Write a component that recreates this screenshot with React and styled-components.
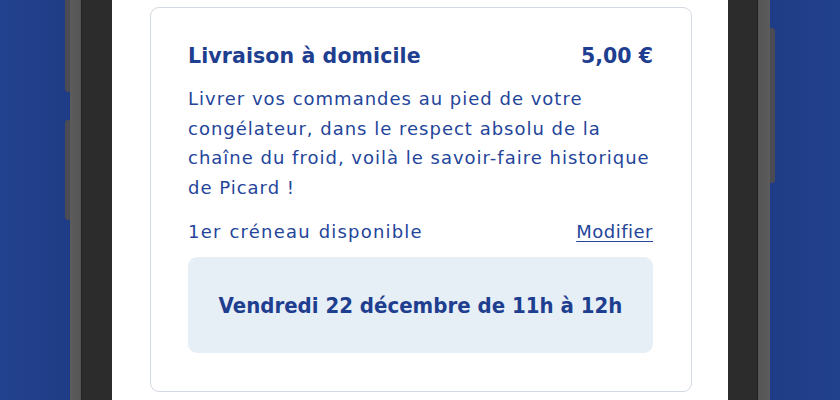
import styled, { createGlobalStyle } from "styled-components"

const GlobalStyle = createGlobalStyle`
    html, body {
        margin: 0;
        padding: 0;
        height: 400px;
        overflow: hidden;
    }
    body {
        background: linear-gradient(to right, #23428f 0%, #1f3c86 8%, #1f3c86 92%, #22418d 100%);
        font-family: "DejaVu Sans", "Noto Sans", sans-serif;
    }
`

const Page = styled.div`
    width: 840px;
    height: 400px;
    display: flex;
    justify-content: center;
`

const Phone = styled.div`
    position: relative;
    width: 700px;
    height: 400px;
    padding: 0 42px;
    box-sizing: border-box;
    background: linear-gradient(to right,
        #5c5c5c 0px, #555555 11px, #222222 11px, #222222 12px, #2c2c2c 12px,
        #2c2c2c 687px, #222222 687px, #222222 688px, #555555 688px, #5c5c5c 700px);
    display: flex;
`

const SideButton = styled.div`
    position: absolute;
    width: 5px;
    top: ${props => props.top}px;
    height: ${props => props.h}px;
    left: ${props => props.side === "left" && "-5px"};
    right: ${props => props.side === "right" && "-5px"};
    background: #4b4b55;
    border-radius: ${props => props.side === "left" ? "3px 0 0 3px" : "0 3px 3px 0"};
`

const Screen = styled.div`
    flex: 1;
    min-width: 0;
    background: #ffffff;
    padding: 7px 36px 0 38px;
    box-sizing: border-box;
`

const Card = styled.div`
    border: 1.5px solid #d3d9e2;
    border-radius: 9px;
    padding: 34px 38px 38px 37px;
    color: #1e3e90;
    overflow: hidden;
`

const Header = styled.div`
    display: flex;
    justify-content: space-between;
    align-items: baseline;
`

const Title = styled.h2`
    margin: 0;
    font-size: 20.5px;
    font-weight: 700;
    line-height: 28px;
    letter-spacing: 0.1px;
`

const Price = styled.span`
    font-size: 20.5px;
    font-weight: 700;
`

const Desc = styled.p`
    margin: 14px 0 0;
    font-size: 18px;
    line-height: 29.5px;
    font-weight: 400;
    letter-spacing: 1px;
    color: #24459a;
    white-space: nowrap;
`

const SlotRow = styled.div`
    display: flex;
    justify-content: space-between;
    align-items: baseline;
    margin-top: 17px;
    font-size: 18px;
    line-height: 26px;
    letter-spacing: 1.2px;
    word-spacing: 1px;
    color: #24459a;
`

const Link = styled.a`
    color: #24459a;
    letter-spacing: 0.5px;
    text-decoration: underline;
    text-underline-offset: 3px;
    text-decoration-thickness: 1px;
`

const SlotBox = styled.div`
    margin-top: 12px;
    height: 96px;
    border-radius: 9px;
    background: #e7eff6;
    display: flex;
    align-items: center;
    justify-content: center;
    font-family: "DejaVu Sans Condensed", "DejaVu Sans", sans-serif;
    font-size: 22px;
    font-weight: 700;
    color: #1e3e90;
`

const App = () => {
  return (
    <>
      <GlobalStyle />
      <Page>
        <Phone>
          <SideButton side="left" top={-10} h={102} />
          <SideButton side="left" top={120} h={100} />
          <SideButton side="right" top={28} h={155} />
          <Screen>
            <Card>
              <Header>
                <Title>Livraison à domicile</Title>
                <Price>5,00 €</Price>
              </Header>
              <Desc>
                Livrer vos commandes au pied de votre<br />
                congélateur, dans le respect absolu de la<br />
                chaîne du froid, voilà le savoir-faire historique<br />
                de Picard !
              </Desc>
              <SlotRow>
                <span>1er créneau disponible</span>
                <Link>Modifier</Link>
              </SlotRow>
              <SlotBox>Vendredi 22 décembre de 11h à 12h</SlotBox>
            </Card>
          </Screen>
        </Phone>
      </Page>
    </>
  )
}

export default App
